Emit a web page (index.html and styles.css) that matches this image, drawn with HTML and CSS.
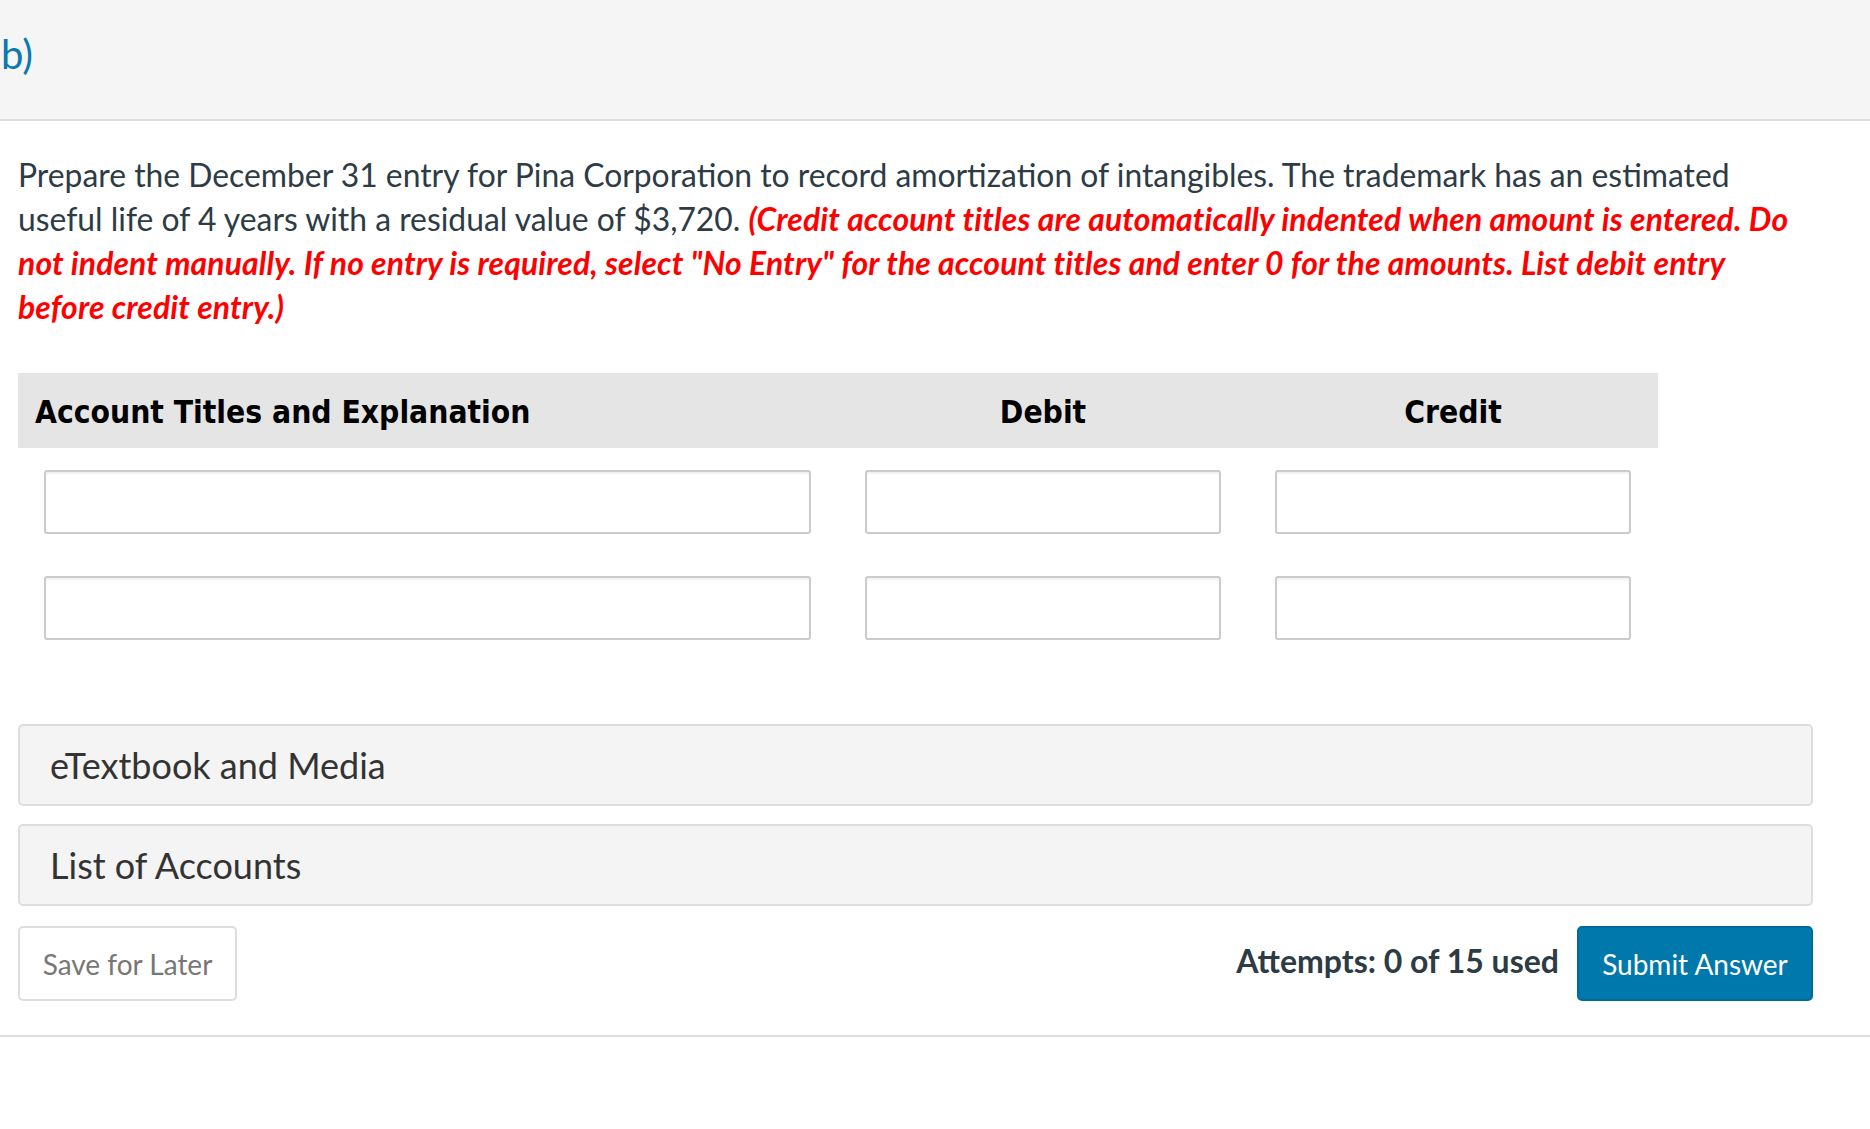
FILE: index.html
```html
<!DOCTYPE html>
<html lang="en">
<head>
<meta charset="utf-8">
<title>Question b)</title>
<link rel="stylesheet" href="styles.css">
</head>
<body>
<div class="part-header"><span class="part-label">b)</span></div>
<div class="content">
  <p class="question">Prepare the December 31 entry for Pina Corporation to record amortization of intangibles. The trademark has an estimated useful life of 4 years with a residual value of $3,720. <em class="note">(Credit account titles are automatically indented when amount is entered. Do not indent manually. If no entry is required, select "No Entry" for the account titles and enter 0 for the amounts. List debit entry before credit entry.)</em></p>

  <div class="journal">
    <div class="jrow jhead">
      <div class="cell c-account">Account Titles and Explanation</div>
      <div class="cell c-amt">Debit</div>
      <div class="cell c-amt">Credit</div>
    </div>
    <div class="jrow">
      <div class="cell c-account"><input class="field" type="text"></div>
      <div class="cell c-amt"><input class="field" type="text"></div>
      <div class="cell c-amt"><input class="field" type="text"></div>
    </div>
    <div class="jrow">
      <div class="cell c-account"><input class="field" type="text"></div>
      <div class="cell c-amt"><input class="field" type="text"></div>
      <div class="cell c-amt"><input class="field" type="text"></div>
    </div>
  </div>

  <div class="accordion">eTextbook and Media</div>
  <div class="accordion">List of Accounts</div>

  <div class="actions">
    <button class="btn btn-save" type="button">Save for Later</button>
    <div class="right">
      <span class="attempts">Attempts: 0 of 15 used</span>
      <button class="btn btn-submit" type="button">Submit Answer</button>
    </div>
  </div>
</div>
<div class="bottom-rule"></div>
</body>
</html>
```

FILE: styles.css
```css
html, body {
  margin: 0;
  padding: 0;
  background: #ffffff;
}
body {
  font-family: Lato, "Open Sans", sans-serif;
  color: #2d3b45;
}
.part-header {
  background: #f5f5f5;
  border-bottom: 2px solid #dedede;
  display: flex;
  align-items: center;
  box-sizing: border-box;
  height: 121px;
  padding-bottom: 12px;
}
.part-label {
  font-size: 40px;
  color: #0a79b0;
  padding-left: 1px;
}
.content {
  padding: 0 57px 0 18px;
}
.question {
  margin: 32px 0 0 0;
  font-size: 31.85px;
  line-height: 44px;
}
.note {
  color: #ff0000;
  font-weight: bold;
  font-style: italic;
  letter-spacing: 0.15px;
}
.journal {
  margin-top: 44px;
  width: 1640px;
}
.jrow {
  display: grid;
  grid-template-columns: 820px 410px 410px;
}
.jhead {
  background: #e5e5e5;
  height: 75px;
  align-items: center;
  font-family: "DejaVu Sans Condensed", "DejaVu Sans", sans-serif;
  font-stretch: condensed;
  font-weight: bold;
  font-size: 31.5px;
  color: #000;
  padding-top: 3px;
  box-sizing: border-box;
}
.jhead .c-account {
  padding-left: 17px;
}
.jhead .c-amt {
  text-align: center;
}
.jrow:not(.jhead) .cell {
  padding: 22px 27px 20px 27px;
}
.jrow:not(.jhead) .c-account {
  padding-left: 26px;
}
.field {
  display: block;
  width: 100%;
  height: 64px;
  box-sizing: border-box;
  border: 2px solid #cbcbcb;
  border-radius: 3px;
  box-shadow: inset 0 2px 2px rgba(0,0,0,0.06);
  background: #fff;
  margin: 0;
}
.accordion {
  margin-top: 18px;
  height: 82px;
  box-sizing: border-box;
  background: #f4f4f4;
  border: 2px solid #dddddd;
  border-radius: 5px;
  display: flex;
  align-items: center;
  padding-left: 30px;
  font-size: 36px;
  color: #333;
}
.journal + .accordion {
  margin-top: 64px;
}
.actions {
  margin-top: 20px;
  display: flex;
  justify-content: space-between;
  align-items: center;
}
.right {
  display: flex;
  align-items: center;
  gap: 18px;
}
.btn {
  font-family: Lato, "Open Sans", sans-serif;
  height: 75px;
  box-sizing: border-box;
  border-radius: 5px;
  font-size: 28px;
  cursor: pointer;
}
.btn-save {
  width: 219px;
  background: #fff;
  border: 2px solid #dddddd;
  color: #777777;
}
.btn-submit {
  width: 236px;
  background: #0078ab;
  border: 2px solid #006a98;
  color: #ffffff;
}
.attempts {
  font-weight: bold;
  font-size: 32px;
  color: #2d3b45;
  position: relative;
  top: -3px;
}
.bottom-rule {
  margin-top: 34px;
  height: 2px;
  background: #e0e0e0;
}
```
